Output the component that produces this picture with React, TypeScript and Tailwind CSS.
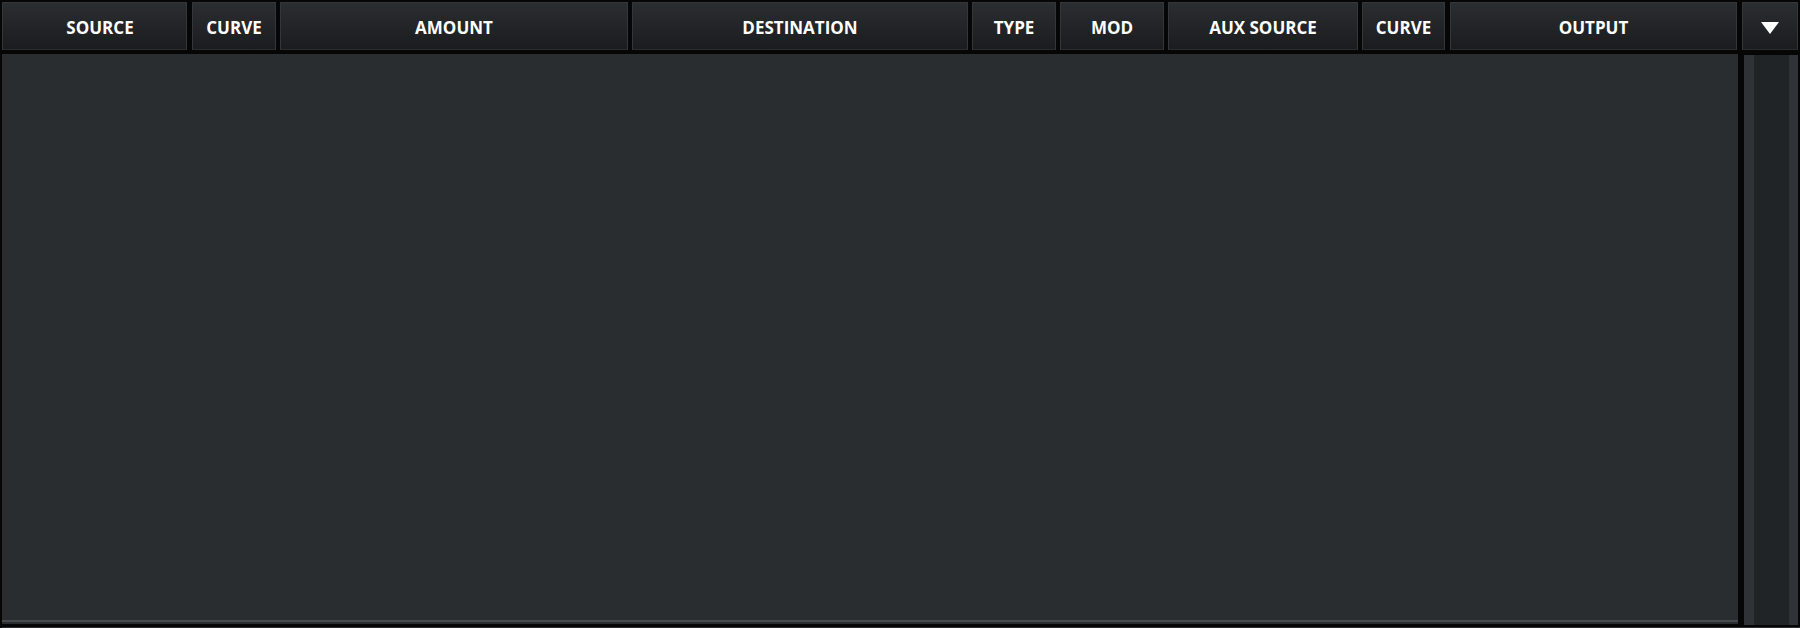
const columns = [
  { label: "SOURCE", w: "w-[185px] pl-[11px]" },
  { label: "CURVE", w: "w-[84px]", ml: "ml-[5px]" },
  { label: "AMOUNT", w: "w-[348px]", ml: "ml-[4px]" },
  { label: "DESTINATION", w: "w-[336px]", ml: "ml-[4px]" },
  { label: "TYPE", w: "w-[84px]", ml: "ml-[4px]" },
  { label: "MOD", w: "w-[104px]", ml: "ml-[4px]" },
  { label: "AUX SOURCE", w: "w-[190px]", ml: "ml-[4px]" },
  { label: "CURVE", w: "w-[83px]", ml: "ml-[4px]" },
  { label: "OUTPUT", w: "w-[287px]", ml: "ml-[5px]" },
];

const cell =
  "h-full flex items-center justify-center pt-[4px] border border-[#34373a] border-b-[#2a2d30] bg-gradient-to-b from-[#2b2e31] to-[#1a1c1e] text-white text-[17px] font-bold";

export default function App() {
  return (
    <div
      className="w-[1800px] h-[628px] bg-[#060606] pl-[2px] pt-[2px] overflow-hidden"
      style={{ fontFamily: '"Open Sans", "Liberation Sans", sans-serif' }}
    >
      {/* header */}
      <div className="flex h-[48px]">
        {columns.map((c, i) => (
          <div key={i} className={`${cell} ${c.w} ${c.ml ?? ""}`}>
            {c.label}
          </div>
        ))}
        <div className={`${cell} w-[56px] ml-[5px]`}>
          <svg width="18" height="12" viewBox="0 0 18 12">
            <path d="M0 0 H18 L9 12 Z" fill="#fff" />
          </svg>
        </div>
      </div>

      {/* body */}
      <div className="flex mt-[4px]">
        <div className="w-[1736px] flex flex-col">
          <div className="h-[566px] bg-[#292d30]" />
          <div className="h-[2px] bg-[#474b4f]" />
          <div className="h-[2px] bg-[#2a2d30]" />
        </div>
        <div className="ml-[6px] mt-[1px] w-[54px] h-[570px] flex">
          <div className="w-[10px] bg-[#2f3337]" />
          <div className="w-[35px] bg-[#212427]" />
          <div className="w-[9px] bg-[#2f3337]" />
        </div>
      </div>
      <div className="mt-[2px] h-[2px] bg-[#2a2c2e]" />
    </div>
  );
}
